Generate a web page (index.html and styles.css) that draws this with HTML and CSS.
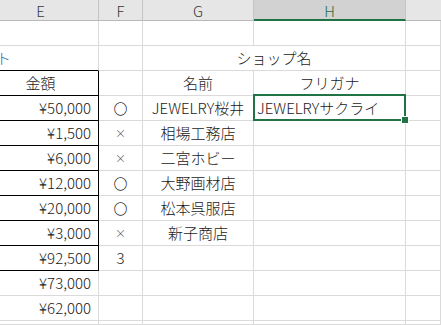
FILE: index.html
```html
<!DOCTYPE html>
<html lang="ja">
<head>
<meta charset="utf-8">
<title>Sheet</title>
<link rel="stylesheet" href="styles.css">
</head>
<body>
<div class="sheet">
  <div class="hd hd-first">E</div>
  <div class="hd">F</div>
  <div class="hd">G</div>
  <div class="hd hd-sel">H</div>
  <div class="hd hd-last"></div>

  <div class="c"></div><div class="c"></div><div class="c"></div><div class="c"></div><div class="c"></div>

  <div class="c tb-top"><span class="title">ト</span></div>
  <div class="c"></div>
  <div class="c span2 ctr">ショップ名</div>
  <div class="c"></div>

  <div class="c tb ctr ctr-e">金額</div>
  <div class="c"></div>
  <div class="c ctr">名前</div>
  <div class="c ctr">フリガナ</div>
  <div class="c"></div>

  <div class="c tb num">¥50,000</div>
  <div class="c ctr mark">〇</div>
  <div class="c ctr">JEWELRY桜井</div>
  <div class="c sel-cell">JEWELRYサクライ<div class="sel"><div class="handle"></div></div></div>
  <div class="c"></div>

  <div class="c tb num">¥1,500</div>
  <div class="c ctr x">×</div>
  <div class="c ctr">相場工務店</div>
  <div class="c"></div>
  <div class="c"></div>

  <div class="c tb num">¥6,000</div>
  <div class="c ctr x">×</div>
  <div class="c ctr">二宮ホビー</div>
  <div class="c"></div>
  <div class="c"></div>

  <div class="c tb num">¥12,000</div>
  <div class="c ctr mark">〇</div>
  <div class="c ctr">大野画材店</div>
  <div class="c"></div>
  <div class="c"></div>

  <div class="c tb num">¥20,000</div>
  <div class="c ctr mark">〇</div>
  <div class="c ctr">松本呉服店</div>
  <div class="c"></div>
  <div class="c"></div>

  <div class="c tb num">¥3,000</div>
  <div class="c ctr x">×</div>
  <div class="c ctr">新子商店</div>
  <div class="c"></div>
  <div class="c"></div>

  <div class="c tb num">¥92,500</div>
  <div class="c ctr">3</div>
  <div class="c"></div>
  <div class="c"></div>
  <div class="c"></div>

  <div class="c num">¥73,000</div>
  <div class="c"></div><div class="c"></div><div class="c"></div><div class="c"></div>

  <div class="c num">¥62,000</div>
  <div class="c"></div><div class="c"></div><div class="c"></div><div class="c"></div>

  <div class="c"></div><div class="c"></div><div class="c"></div><div class="c"></div><div class="c"></div>
</div>
</body>
</html>
```
FILE: styles.css
```css
html, body {
  margin: 0;
  padding: 0;
  background: #ffffff;
  overflow: hidden;
  width: 441px;
  height: 325px;
}

.sheet {
  display: grid;
  grid-template-columns: 99px 44px 111px 152px 35px;
  grid-template-rows: 21px repeat(12, 25px) 4px;
  font-family: "Noto Sans CJK JP", "Noto Sans", sans-serif;
  font-weight: 300;
  font-size: 15px;
  color: #1a1a1a;
}

.hd {
  background: #e6e6e6;
  border-right: 1px solid #c4c4c4;
  border-bottom: 1px solid #b8b8b8;
  color: #3a3a3a;
  font-size: 15px;
  display: flex;
  align-items: center;
  justify-content: center;
  line-height: 1;
  padding-top: 1px;
  box-sizing: border-box;
}

.hd-first {
  padding-right: 17px;
}

.hd-sel {
  background: #d2d2d2;
  color: #217346;
  border-bottom: 2px solid #217346;
  border-right-color: #c4c4c4;
}

.hd-last {
  border-right: none;
}

.c {
  border-right: 1px solid #dadada;
  border-bottom: 1px solid #dadada;
  box-sizing: border-box;
  display: flex;
  align-items: flex-end;
  padding: 0 3px 2px;
  line-height: 20px;
  white-space: nowrap;
  min-width: 0;
  overflow: visible;
}

.span2 {
  grid-column: span 2;
}

.ctr {
  justify-content: center;
}

.ctr-e {
  padding-right: 20px;
}

.num {
  justify-content: flex-end;
  padding-right: 7px;
}

.tb {
  border-right-color: #000000;
  border-bottom-color: #000000;
}

.tb-top {
  border-bottom-color: #000000;
  padding-left: 0;
}

.title {
  color: #2f5f9f;
  margin-left: -4px;
}

.mark {
  font-size: 14px;
}

.x {
  font-size: 11px;
  color: #444;
}

.sel-cell {
  position: relative;
  padding-left: 3px;
}

.sel {
  position: absolute;
  left: -1px;
  top: -2px;
  right: -1px;
  bottom: -1px;
  border: 2px solid #217346;
}

.handle {
  position: absolute;
  right: -5px;
  bottom: -5px;
  width: 6px;
  height: 6px;
  background: #217346;
  border: 1px solid #ffffff;
}
```
